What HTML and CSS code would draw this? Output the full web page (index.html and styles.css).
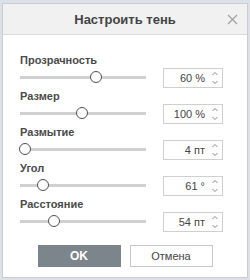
FILE: index.html
```html
<!DOCTYPE html>
<html lang="ru">
<head>
    <meta charset="UTF-8">
    <title>Настроить тень</title>
    <link rel="stylesheet" href="styles.css">
</head>
<body>
    <div class="dialog">
        <div class="dialog-header">
            <span class="dialog-title">Настроить тень</span>
            <svg class="close" width="11" height="11" viewBox="0 0 11 11"><path d="M1 1L10 10M10 1L1 10" stroke="#a0a0a0" stroke-width="1.2"/></svg>
        </div>
        <div class="dialog-body">
            <div class="row">
                <div class="label">Прозрачность</div>
                <div class="line">
                    <div class="slider"><div class="thumb" style="left: 56%"></div></div>
                    <div class="spin"><span class="value">60 %</span><svg class="arrows" width="8" height="14" viewBox="0 0 8 14"><path d="M1.5 4L4 1.5L6.5 4M1.5 10L4 12.5L6.5 10" fill="none" stroke="#888" stroke-width="1"/></svg></div>
                </div>
            </div>
            <div class="row">
                <div class="label">Размер</div>
                <div class="line">
                    <div class="slider"><div class="thumb" style="left: 45%"></div></div>
                    <div class="spin"><span class="value">100 %</span><svg class="arrows" width="8" height="14" viewBox="0 0 8 14"><path d="M1.5 4L4 1.5L6.5 4M1.5 10L4 12.5L6.5 10" fill="none" stroke="#888" stroke-width="1"/></svg></div>
                </div>
            </div>
            <div class="row">
                <div class="label">Размытие</div>
                <div class="line">
                    <div class="slider"><div class="thumb" style="left: 0%"></div></div>
                    <div class="spin"><span class="value">4 пт</span><svg class="arrows" width="8" height="14" viewBox="0 0 8 14"><path d="M1.5 4L4 1.5L6.5 4M1.5 10L4 12.5L6.5 10" fill="none" stroke="#888" stroke-width="1"/></svg></div>
                </div>
            </div>
            <div class="row">
                <div class="label">Угол</div>
                <div class="line">
                    <div class="slider"><div class="thumb" style="left: 14%"></div></div>
                    <div class="spin"><span class="value">61 °</span><svg class="arrows" width="8" height="14" viewBox="0 0 8 14"><path d="M1.5 4L4 1.5L6.5 4M1.5 10L4 12.5L6.5 10" fill="none" stroke="#888" stroke-width="1"/></svg></div>
                </div>
            </div>
            <div class="row">
                <div class="label">Расстояние</div>
                <div class="line">
                    <div class="slider"><div class="thumb" style="left: 23%"></div></div>
                    <div class="spin"><span class="value">54 пт</span><svg class="arrows" width="8" height="14" viewBox="0 0 8 14"><path d="M1.5 4L4 1.5L6.5 4M1.5 10L4 12.5L6.5 10" fill="none" stroke="#888" stroke-width="1"/></svg></div>
                </div>
            </div>
        </div>
        <div class="dialog-footer">
            <button class="btn btn-primary">OK</button>
            <button class="btn">Отмена</button>
        </div>
    </div>
</body>
</html>
```

FILE: styles.css
```css
body {
    margin: 0;
    background: #dde1e7;
    font-family: "Liberation Sans", Arial, sans-serif;
    color: #444;
}

.dialog {
    margin: 3px 2px;
    width: 244px;
    height: 273px;
    border: 1px solid #c9cdd3;
    background: #fff;
    display: flex;
    flex-direction: column;
}

.dialog-header {
    height: 30px;
    background: #f1f1f1;
    border-bottom: 1px solid #dadada;
    display: flex;
    align-items: center;
    justify-content: center;
    position: relative;
}

.dialog-title {
    font-size: 13px;
    font-weight: bold;
    color: #444;
}

.close {
    position: absolute;
    right: 9px;
    top: 10px;
}

.dialog-body {
    padding: 18px 0 0 17px;
    display: flex;
    flex-direction: column;
    gap: 1px;
}

.label {
    height: 14px;
    line-height: 14px;
    font-size: 11px;
    font-weight: bold;
    color: #4a4a4a;
}

.line {
    margin-top: 1px;
    height: 20px;
    display: flex;
    align-items: center;
    gap: 17px;
}

.slider {
    width: 126px;
    height: 3px;
    background: #d0d0d0;
    position: relative;
    margin-top: -2px;
}

.thumb {
    position: absolute;
    top: -5px;
    width: 12px;
    height: 12px;
    margin-left: -1px;
    border: 1px solid #505050;
    border-radius: 50%;
    background: #fff;
    box-sizing: border-box;
}

.spin {
    width: 60px;
    height: 20px;
    box-sizing: border-box;
    border: 1px solid #cfcfcf;
    display: flex;
    align-items: center;
    justify-content: flex-end;
    padding-right: 3px;
    gap: 6px;
}

.value {
    font-size: 11px;
    color: #444;
}

.dialog-footer {
    margin-top: 13px;
    display: flex;
    justify-content: center;
    gap: 9px;
}

.btn {
    width: 83px;
    height: 22px;
    border: 1px solid #c8c8c8;
    background: #fff;
    font-family: "Liberation Sans", Arial, sans-serif;
    font-size: 11px;
    color: #444;
    padding: 0;
}

.btn-primary {
    background: #7d858c;
    border-color: #7d858c;
    color: #fff;
    font-weight: bold;
    font-size: 12px;
}
```
